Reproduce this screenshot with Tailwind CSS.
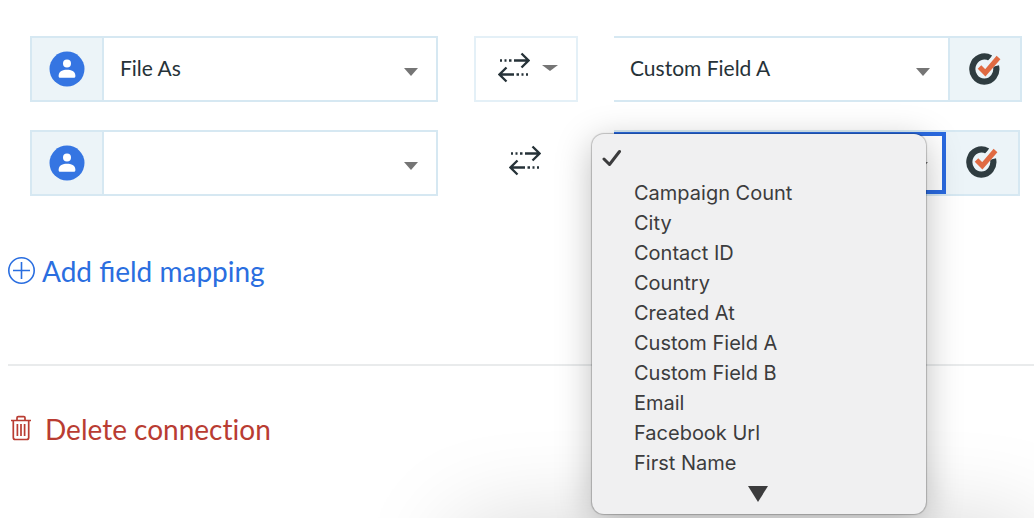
<!DOCTYPE html>
<html lang="en">
<head>
  <meta charset="UTF-8">
  <meta name="viewport" content="width=device-width, initial-scale=1.0">
  <title>Field mapping</title>
  <script src="https://cdn.jsdelivr.net/npm/@tailwindcss/browser@4"></script>
</head>
<body class="bg-white font-[Lato,sans-serif] text-[#263238]">
  <!-- shared icons -->
  <svg class="hidden">
    <symbol id="person" viewBox="0 0 36 36">
      <circle cx="18" cy="18" r="17.5" fill="#3575e2" />
      <circle cx="18" cy="12.6" r="4" fill="#fff" />
      <path d="M9.7 24.3c0-3.800 4.200-5.500 8.300-5.500s8.300 1.700 8.300 5.500v1.300a1.200 1.200 0 0 1-1.200 1.200H10.900a1.200 1.200 0 0 1-1.200-1.200z" fill="#fff" />
    </symbol>
    <symbol id="arrows" viewBox="0 0 32 32">
      <path d="M16 8.500H30M23.500 1.500L30.500 8.500L23.500 15.500M16 22.500H2M8.500 15.500L1.500 22.500L8.500 29.500" fill="none" stroke="#263238" stroke-width="2.300" />
      <path d="M2 8.500H4M6.500 8.500H8.500M11 8.500H13.500M18.500 22.500H21M23.500 22.500H25.500M28 22.500H30" fill="none" stroke="#263238" stroke-width="2.300" />
    </symbol>
    <symbol id="check-ring" viewBox="0 0 32 32">
      <path d="M21.500 5.200A12 12.600 0 1 0 27 13" fill="none" stroke="#2f3c40" stroke-width="6.200" />
      <path d="M16 17L31 1" fill="none" stroke="#ecf4f8" stroke-width="8.500" />
      <path d="M10.500 14L16.300 19.800L29.500 4.500" fill="none" stroke="#e06a42" stroke-width="5" />
    </symbol>
    <symbol id="caret" viewBox="0 0 14 8">
      <path d="M0 0H14L7 8z" fill="#757575" />
    </symbol>
  </svg>

  <main class="relative min-h-screen overflow-hidden pt-9">
    <div class="flex flex-col gap-7 pl-[30px] pr-3">
      <!-- mapping 1 -->
      <div class="grid grid-cols-[1fr_104px_1fr] gap-9">
        <div class="flex h-[66px] border-2 border-[#d6e8f2]">
          <span class="flex w-[72px] items-center justify-center border-r-2 border-[#d6e8f2] bg-[#ecf4f8]">
            <svg class="size-9"><use href="#person" /></svg>
          </span>
          <div class="relative flex-1">
            <select aria-label="Source field 1" class="h-full w-full appearance-none bg-white px-4 pb-0.5 text-[21px] outline-none">
              <option>File As</option>
            </select>
            <svg class="pointer-events-none absolute right-[18px] top-[30px] h-2 w-3.5"><use href="#caret" /></svg>
          </div>
        </div>
        <button type="button" aria-label="Sync direction 1" class="flex items-center justify-center gap-3 border-2 border-[#e4f0f7] pb-0.5 pl-1">
          <svg class="size-8"><use href="#arrows" /></svg>
          <svg class="h-1.5 w-4" viewBox="0 0 16 6"><path d="M0 0H16L8 6z" fill="#757575" /></svg>
        </button>
        <div class="flex h-[66px] border-2 border-l-0 border-[#d6e8f2]">
          <div class="relative flex-1">
            <select aria-label="Target field 1" class="h-full w-full appearance-none bg-white px-4 pb-0.5 text-[21px] outline-none">
              <option>Custom Field A</option>
            </select>
            <svg class="pointer-events-none absolute right-[18px] top-[30px] h-2 w-3.5"><use href="#caret" /></svg>
          </div>
          <span class="flex w-[72px] items-center justify-center border-l-2 border-[#d6e8f2] bg-[#ecf4f8]">
            <svg class="size-8"><use href="#check-ring" /></svg>
          </span>
        </div>
      </div>

      <!-- mapping 2 -->
      <div class="grid grid-cols-[1fr_104px_1fr] gap-9">
        <div class="flex h-[66px] border-2 border-[#d6e8f2]">
          <span class="flex w-[72px] items-center justify-center border-r-2 border-[#d6e8f2] bg-[#ecf4f8]">
            <svg class="size-9"><use href="#person" /></svg>
          </span>
          <div class="relative flex-1">
            <select aria-label="Source field 2" class="h-full w-full appearance-none bg-white px-4 pb-0.5 text-[21px] outline-none">
              <option></option>
            </select>
            <svg class="pointer-events-none absolute right-[18px] top-[30px] h-2 w-3.5"><use href="#caret" /></svg>
          </div>
        </div>
        <button type="button" aria-label="Sync direction 2" class="flex items-center justify-center pb-1 pr-0.5">
          <svg class="size-8"><use href="#arrows" /></svg>
        </button>
        <div class="relative mr-0.5 flex h-[66px] border-y-2 border-r-2 border-[#d6e8f2]">
          <div class="relative flex-1">
            <select aria-label="Target field 2" class="h-full w-full appearance-none border-4 border-[#2a6ae0] bg-white px-4 text-[21px] outline-none">
              <option></option>
            </select>
            <svg class="pointer-events-none absolute right-[18px] top-[30px] h-2 w-3.5"><use href="#caret" /></svg>
          </div>
          <span class="flex w-[72px] items-center justify-center bg-[#ecf4f8] pb-0.5">
            <svg class="size-8"><use href="#check-ring" /></svg>
          </span>

          <!-- open menu -->
          <div class="absolute -left-[22px] right-[92px] top-0.5 z-10 rounded-xl bg-[#f0f0f1] pb-2 pt-2 font-[Inter,sans-serif] text-xl leading-[30px] text-[#3c3c3d] shadow-[0_0_1px_1px_rgba(0,0,0,0.22),0_8px_36px_rgba(0,0,0,0.26)]">
            <ul role="listbox" aria-label="Target field options">
              <li role="option" aria-selected="true" aria-label="None" class="flex h-9 items-center pb-1 pl-2.5">
                <svg class="h-[18px] w-5" viewBox="0 0 20 18"><path d="M2 10L7.500 15.500L17.500 2.500" fill="none" stroke="#3c3c3d" stroke-width="3" stroke-linecap="round" stroke-linejoin="round" /></svg>
              </li>
              <li role="option" class="pl-[42px]">Campaign Count</li>
              <li role="option" class="pl-[42px]">City</li>
              <li role="option" class="pl-[42px]">Contact ID</li>
              <li role="option" class="pl-[42px]">Country</li>
              <li role="option" class="pl-[42px]">Created At</li>
              <li role="option" class="pl-[42px]">Custom Field A</li>
              <li role="option" class="pl-[42px]">Custom Field B</li>
              <li role="option" class="pl-[42px]">Email</li>
              <li role="option" class="pl-[42px]">Facebook Url</li>
              <li role="option" class="pl-[42px]">First Name</li>
            </ul>
            <div class="flex h-7 items-center justify-center pr-0.5 pt-1">
              <svg class="h-4 w-5" viewBox="0 0 20 16"><path d="M0 0H20L10 16z" fill="#3c3c3d" /></svg>
            </div>
          </div>
        </div>
      </div>
    </div>

    <div class="ml-2 mt-[55px]">
      <button type="button" class="flex items-center gap-1.5 text-[28px] leading-10 text-[#2a6ee0]">
        <svg class="size-7" viewBox="0 0 28 28" fill="none" stroke="currentColor" stroke-width="1.600">
          <circle cx="13.500" cy="13.500" r="12.700" />
          <path d="M13.500 5V22M5 13.500H22" />
        </svg>
        Add field mapping
      </button>
      <hr class="mt-[73px] border-t-2 border-[#e9ebec]">
      <button type="button" class="mt-[43px] flex items-center gap-3.5 pl-[3px] text-[28px] leading-10 text-[#b93c32] [font-variant-ligatures:none]">
        <svg class="h-7 w-5" viewBox="0 0 20 28" fill="none" stroke="currentColor" stroke-width="1.700">
          <path d="M0 5.500H20M6 5V2.800A1.200 1.200 0 0 1 7.200 1.600H12.800A1.200 1.200 0 0 1 14 2.800V5M2.300 5.500V22.500A2 2 0 0 0 4.300 24.500H15.700A2 2 0 0 0 17.700 22.500V5.500M6.400 9V21M10 9V21M13.600 9V21" />
        </svg>
        Delete connection
      </button>
    </div>

    <!-- shade of the panel below -->
    <div class="pointer-events-none absolute left-[460px] right-0 top-full h-40 shadow-[0_10px_100px_rgba(0,0,0,0.18)]"></div>
  </main>
</body>
</html>
